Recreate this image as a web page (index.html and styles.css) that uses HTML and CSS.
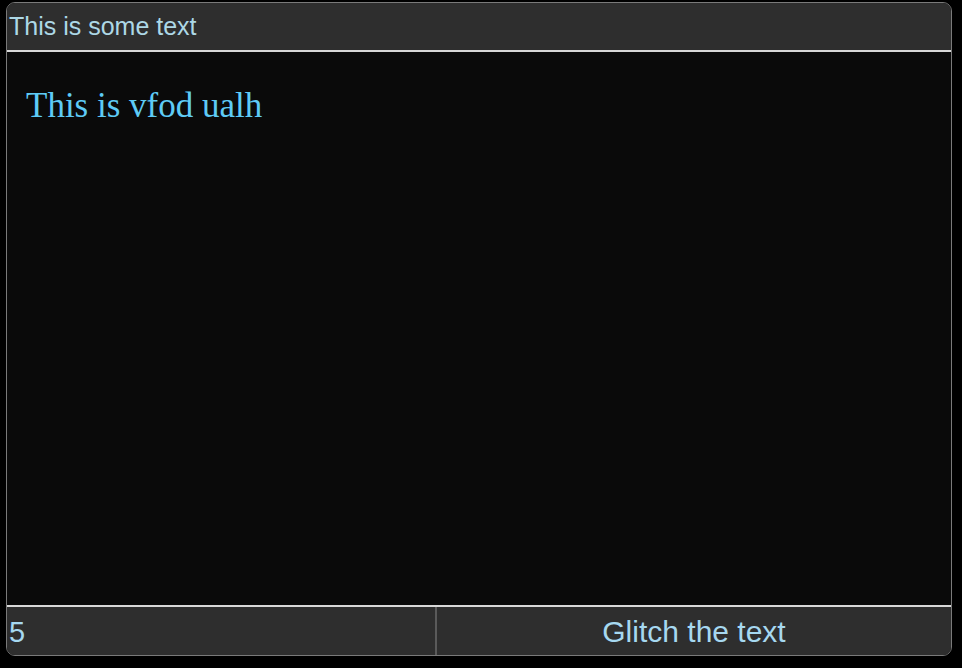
FILE: index.html
```html
<!DOCTYPE html>
<html>
<head>
<meta charset="utf-8">
<link rel="stylesheet" href="styles.css">
</head>
<body>
<div class="panel">
  <div class="header">This is some text</div>
  <div class="content">
    <div class="glitch">This is vfod ualh</div>
  </div>
  <div class="footer">
    <input class="count" type="text" value="5">
    <button class="btn">Glitch the text</button>
  </div>
</div>
</body>
</html>
```
FILE: styles.css
```css
html, body {
  margin: 0;
  padding: 0;
  background: #000;
  height: 100%;
}
body {
  padding: 2px 10px 0 6px;
  box-sizing: border-box;
  font-family: "Liberation Sans", Arial, sans-serif;
}
.panel {
  border: 1px solid #7a7a7a;
  border-radius: 9px;
  overflow: hidden;
  height: 654px;
  box-sizing: border-box;
  display: flex;
  flex-direction: column;
  background: #0a0a0a;
}
.header {
  height: 47px;
  background: #2e2e2e;
  color: #add8e6;
  font-size: 25px;
  display: flex;
  align-items: center;
  padding-left: 2px;
  border-bottom: 2px solid #d8d8d8;
  flex: none;
}
.content {
  flex: 1;
  background: #0a0a0a;
  padding: 34px 19px 0;
}
.glitch {
  font-family: "Liberation Serif", "Times New Roman", serif;
  font-size: 35px;
  line-height: 40px;
  color: #5ecbf6;
}
.footer {
  flex: none;
  height: 48px;
  border-top: 2px solid #d8d8d8;
  display: flex;
  background: #2e2e2e;
}
.count {
  width: 430px;
  flex: none;
  box-sizing: border-box;
  margin: 0;
  padding: 2px 0 0 2px;
  background: #2e2e2e;
  border: none;
  border-right: 2px solid #5a5a5a;
  color: #a6d8f0;
  font-family: "Liberation Sans", Arial, sans-serif;
  font-size: 29px;
  outline: none;
}
.btn {
  flex: 1;
  margin: 0;
  background: #2e2e2e;
  border: none;
  color: #a6d8f0;
  font-family: "Liberation Sans", Arial, sans-serif;
  font-size: 30px;
  padding: 2px 0 0 0;
}
```
